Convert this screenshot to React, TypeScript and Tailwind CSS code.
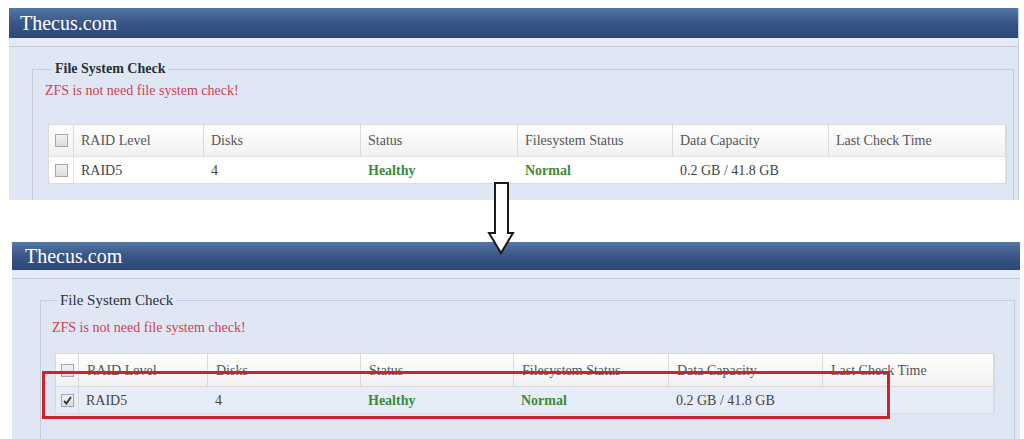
import React from "react"

type Row = { level: string; disks: string; status: string; fs: string; capacity: string; last: string }

const row: Row = {
  level: "RAID5",
  disks: "4",
  status: "Healthy",
  fs: "Normal",
  capacity: "0.2 GB / 41.8 GB",
  last: "",
}

const headers = ["RAID Level", "Disks", "Status", "Filesystem Status", "Data Capacity", "Last Check Time"]

const Checkbox: React.FC<{ checked?: boolean }> = ({ checked }) => (
  <span className="flex h-[13px] w-[13px] items-center justify-center border border-[#a4a8ae] bg-gradient-to-b from-[#f2f2f2] to-[#dcdcdc]">
    {checked && (
      <svg width="11" height="11" viewBox="0 0 11 11">
        <path d="M2 6 L4.5 8.5 L9 2" fill="none" stroke="#2b3440" strokeWidth="1.8" />
      </svg>
    )}
  </span>
)

type PanelProps = {
  second?: boolean
}

const Panel: React.FC<PanelProps> = ({ second }) => {
  const cols = second
    ? "grid-cols-[23px_129px_153px_153px_155px_154px_171px]"
    : "grid-cols-[25px_130px_157px_157px_155px_156px_177px]"

  return (
    <div
      className={
        second
          ? "ml-[12px] mt-[42px] h-[197px] w-[1008px] overflow-hidden bg-[#dfe7f5]"
          : "ml-[9px] mt-[8px] h-[192px] w-[1010px] overflow-hidden border-r border-[#c9d0dc] bg-[#dfe7f5]"
      }
    >
      {/* title bar */}
      <div
        className={
          second
            ? "flex h-[28px] items-center bg-gradient-to-b from-[#5476a5] via-[#385686] to-[#2c4878] pl-[13px]"
            : "flex h-[30px] items-center bg-gradient-to-b from-[#5476a5] via-[#385686] to-[#2c4878] pl-[11px]"
        }
      >
        <span className="text-[20px] leading-none text-white">Thecus.com</span>
      </div>
      <div className="h-[9px] border-b border-[#c2c8d4] bg-[#e4ebf7]" />

      <div className={second ? "pt-[13px]" : "pt-[14px]"}>
        <fieldset
          className={
            second
              ? "ml-[28px] mr-[5px] h-[200px] border border-[#c6ccd8] p-0"
              : "ml-[23px] mr-[4px] h-[200px] border border-[#c6ccd8] p-0"
          }
        >
          <legend
            className={
              second
                ? "ml-[16px] px-[3px] text-[15px] leading-[16px] text-[#2a2f38]"
                : "ml-[19px] px-[3px] text-[14px] font-bold leading-[16px] text-[#2a2f38]"
            }
          >
            File System Check
          </legend>

          <div className={second ? "pt-[12px]" : "pt-[6px]"}>
            <div
              className={
                second
                  ? "pl-[11px] text-[14px] leading-[16px] text-[#cf3f50]"
                  : "pl-[12px] text-[14px] leading-[16px] text-[#cf3f50]"
              }
            >
              ZFS is not need file system check!
            </div>

            <div className={second ? "mt-[17px] pl-[14px]" : "mt-[25px] pl-[15px]"}>
              <div className={`grid ${cols} w-max border border-[#d6dae2]`}>
                <div
                  className={
                    second
                      ? "flex h-[32px] items-center justify-center border-r border-[#dadada] bg-gradient-to-b from-white to-[#f1f1f1]"
                      : "flex h-[31px] items-center justify-center border-r border-[#dadada] bg-gradient-to-b from-white to-[#f1f1f1]"
                  }
                >
                  <Checkbox />
                </div>
                {headers.map((h) => (
                  <div
                    key={h}
                    className={
                      second
                        ? "flex h-[32px] items-center border-r border-[#dadada] bg-gradient-to-b from-white to-[#f1f1f1] pl-[8px] text-[14px] text-[#555]"
                        : "flex h-[31px] items-center border-r border-[#dadada] bg-gradient-to-b from-white to-[#f1f1f1] pl-[7px] text-[14px] text-[#555]"
                    }
                  >
                    {h}
                  </div>
                ))}

                <div
                  className={
                    second
                      ? "flex h-[27px] items-center justify-center border-r border-t border-[#dadada] bg-[#e6edf8]"
                      : "flex h-[27px] items-center justify-center border-r border-t border-[#e2e2e2] bg-white"
                  }
                >
                  <Checkbox checked={second} />
                </div>
                {[row.level, row.disks, row.status, row.fs, row.capacity, row.last].map((v, i) => (
                  <div
                    key={i}
                    className={[
                      "flex h-[27px] items-center border-t pl-[7px] text-[14px]",
                      second ? "border-[#dadada] bg-[#e6edf8]" : "border-[#e2e2e2] bg-white",
                      i === 2 || i === 3 ? "font-bold text-[#3c8a3c]" : "text-[#444]",
                      i === 5 ? "border-r" : "",
                    ].join(" ")}
                  >
                    {v}
                  </div>
                ))}
              </div>
            </div>
          </div>
        </fieldset>
      </div>
    </div>
  )
}

export default function App() {
  return (
    <div className="relative h-[439px] w-[1024px] overflow-hidden bg-white font-serif">
      <div className="flex flex-col font-['Liberation_Serif',serif]">
        <Panel />
        <Panel second />
      </div>

      {/* down arrow between the two screens */}
      <svg className="absolute left-[486px] top-[181px]" width="30" height="76" viewBox="0 0 30 76">
        <path
          d="M9 2 H22 V52 H27 L15 72 L3 52 H9 Z"
          fill="white"
          stroke="#1a1a1a"
          strokeWidth="2"
          strokeLinejoin="miter"
        />
      </svg>

      {/* highlight box */}
      <div className="absolute left-[42px] top-[371px] h-[48px] w-[848px] border-[3px] border-[#c9252f]" />
    </div>
  )
}
